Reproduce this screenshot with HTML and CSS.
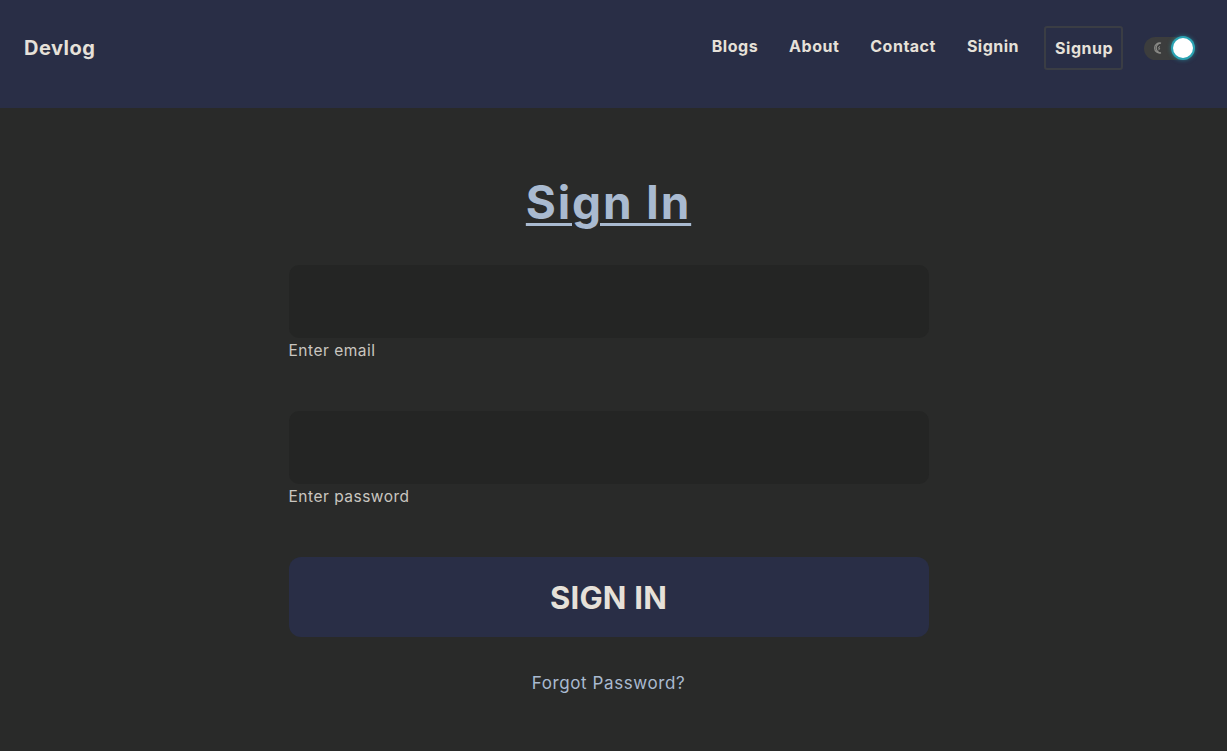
FILE: index.html
```html
<!DOCTYPE html>
<html lang="en">
<head>
<meta charset="utf-8">
<title>Devlog - Sign In</title>
<link rel="stylesheet" href="styles.css">
</head>
<body>
<header class="topbar">
  <a class="brand" href="#">Devlog</a>
  <nav class="nav">
    <a class="nav-link" href="#">Blogs</a>
    <a class="nav-link" href="#">About</a>
    <a class="nav-link" href="#">Contact</a>
    <a class="nav-link" href="#">Signin</a>
    <a class="nav-link nav-boxed" href="#">Signup</a>
    <span class="toggle">
      <svg class="moon" width="10" height="12" viewBox="0 0 10 12"><path d="M7 1.2A5 5 0 1 0 7 10.8 4 4 0 0 1 7 1.2Z" fill="none" stroke="#8a8a86" stroke-width="1.2"/><path d="M5.6 4.2 4.4 6.2h1.4L4.6 8.2" fill="none" stroke="#8a8a86" stroke-width="1"/></svg>
      <span class="knob"></span>
    </span>
  </nav>
</header>
<main class="page">
  <form class="card">
    <h1 class="title">Sign In</h1>
    <div class="field">
      <input class="input" type="email">
      <label class="label">Enter email</label>
    </div>
    <div class="field field-last">
      <input class="input" type="password">
      <label class="label">Enter password</label>
    </div>
    <button class="btn" type="button">SIGN IN</button>
    <a class="forgot" href="#">Forgot Password?</a>
  </form>
</main>
</body>
</html>
```

FILE: styles.css
```css
* { box-sizing: border-box; }
html, body { margin: 0; padding: 0; }
body {
  background: #292a29;
  font-family: Inter, "Open Sans", sans-serif;
  color: #e6e1d9;
  height: 751px;
  overflow: hidden;
}
a { text-decoration: none; color: inherit; }

.topbar {
  height: 108px;
  background: #292e46;
  display: flex;
  align-items: center;
  justify-content: space-between;
  padding: 0 32px 12px 24px;
}
.brand {
  font-size: 20px;
  font-weight: 700;
  color: #e6e1d9;
  letter-spacing: 0.5px;
}
.nav {
  display: flex;
  align-items: center;
}
.nav-link {
  font-size: 16px;
  font-weight: 700;
  color: #e6e1d9;
  margin-left: 31px;
  padding-bottom: 4px;
  letter-spacing: 0.5px;
}
.nav-link:first-child { margin-left: 0; }
.nav-boxed {
  margin-left: 25px;
  padding: 9px 8px 9px 9px;
  border: 2px solid #3a3d44;
  border-radius: 3px;
  height: 44px;
  display: flex;
  align-items: center;
}
.toggle {
  margin-left: 21px;
  width: 51px;
  height: 23px;
  border-radius: 12px;
  background: #3c3d3d;
  display: flex;
  align-items: center;
  justify-content: space-between;
  padding: 0 2px 0 10px;
}
.knob {
  width: 20px;
  height: 20px;
  border-radius: 50%;
  background: #ffffff;
  box-shadow: 0 0 0 2px #2aa3b3, 0 0 4px 2px rgba(42,163,179,0.6);
}

.page {
  display: flex;
  justify-content: center;
  padding-right: 10px;
}
.card {
  width: 640px;
  display: flex;
  flex-direction: column;
  align-items: stretch;
  padding-top: 64px;
}
.title {
  margin: 0 0 33px;
  text-align: center;
  font-size: 46px;
  font-weight: 700;
  line-height: 60px;
  color: #a9bad0;
  text-decoration: underline;
  text-decoration-thickness: 3px;
  text-underline-offset: 4px;
  letter-spacing: 1.8px;
}
.field {
  display: flex;
  flex-direction: column;
  margin-bottom: 50px;
}
.field-last { margin-bottom: 50px; }
.input {
  height: 73px;
  border: none;
  border-radius: 10px;
  background: #242524;
  outline: none;
  color: #e6e1d9;
  font: inherit;
}
.label {
  font-size: 15.5px;
  color: #c9c6c0;
  margin-top: 3px;
  line-height: 20px;
  letter-spacing: 0.5px;
}
.btn {
  height: 80px;
  border: none;
  border-radius: 12px;
  background: #292e46;
  color: #e6e1d9;
  font-family: inherit;
  font-size: 31px;
  font-weight: 700;
  margin-top: 0;
  letter-spacing: 0.2px;
}
.forgot {
  margin-top: 34px;
  text-align: center;
  font-size: 17px;
  color: #a9bad0;
  line-height: 24px;
  letter-spacing: 0.6px;
}
```
